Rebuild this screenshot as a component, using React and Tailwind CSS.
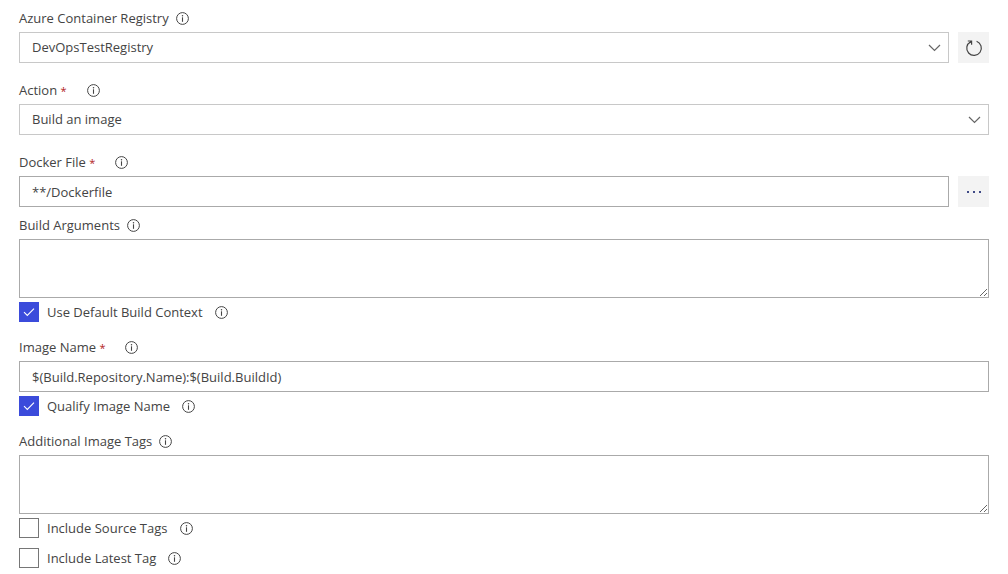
import React, { useState } from "react";

const InfoIcon = () => (
    <svg width="13" height="13" viewBox="0 0 13 13" fill="none" className="shrink-0" aria-hidden="true">
        <circle cx="6.5" cy="6.5" r="5.9" stroke="#444" strokeWidth="1" />
        <path d="M6.5 5.3V9.8" stroke="#444" strokeWidth="1.1" />
        <circle cx="6.5" cy="3.7" r="0.75" fill="#444" />
    </svg>
);

const ChevronIcon = () => (
    <svg
        width="13"
        height="8"
        viewBox="0 0 13 8"
        fill="none"
        className="pointer-events-none absolute right-2 top-3"
        aria-hidden="true"
    >
        <path d="M1 1L6.5 6.5L12 1" stroke="#666" strokeWidth="1.2" />
    </svg>
);

const RefreshIcon = () => (
    <svg width="18" height="18" viewBox="0 0 18 18" fill="none" aria-hidden="true">
        <path d="M11.6 2.3A7.3 7.3 0 1 1 5.6 2.7" stroke="#444" strokeWidth="1.2" />
        <path d="M2.8 2H6.6V5.8M6.6 2L4.4 4.2" stroke="#444" strokeWidth="1.2" />
    </svg>
);

const FieldLabel = ({ id, text, required }) => (
    <div className={`flex h-5 items-center ${required ? "gap-5" : "gap-[7px]"}`}>
        <label htmlFor={id} className="leading-5">
            {text}
            {required && (
                <>
                    {" "}
                    <span className="text-[11px] text-[#b22222]">*</span>
                </>
            )}
        </label>
        <InfoIcon />
    </div>
);

const SelectBox = ({ id, options }) => (
    <div className="relative flex-1">
        <select
            id={id}
            className="block h-[31px] w-full appearance-none border border-[#c8c8c8] bg-white pl-3 pr-8 outline-none focus:border-[#3b4bdb]"
        >
            {options.map((option) => (
                <option key={option}>{option}</option>
            ))}
        </select>
        <ChevronIcon />
    </div>
);

const TextBox = ({ id, initial }) => {
    const [value, setValue] = useState(initial);

    return (
        <input
            id={id}
            type="text"
            value={value}
            onChange={(e) => setValue(e.target.value)}
            className="block h-[31px] w-full min-w-0 flex-1 border border-[#aaaaaa] bg-white px-3 outline-none focus:border-[#3b4bdb]"
        />
    );
};

const TextArea = ({ id }) => (
    <textarea
        id={id}
        className="block h-[59px] w-full resize border border-[#aaaaaa] bg-white px-3 py-1 outline-none focus:border-[#3b4bdb]"
    />
);

const SideButton = ({ label, children }) => (
    <button
        type="button"
        aria-label={label}
        className="flex h-[31px] w-[31px] shrink-0 items-center justify-center bg-[#f3f3f3] hover:bg-[#e6e6e6]"
    >
        {children}
    </button>
);

const CheckRow = ({ id, text, initial = false }) => {
    const [checked, setChecked] = useState(initial);

    return (
        <div className="flex h-5 items-center gap-3">
            <div className="flex items-center gap-2">
                <div className="relative h-5 w-5">
                    <input
                        id={id}
                        type="checkbox"
                        checked={checked}
                        onChange={(e) => setChecked(e.target.checked)}
                        className="block h-5 w-5 appearance-none border border-[#767676] bg-white checked:border-[#3b4bdb] checked:bg-[#3b4bdb]"
                    />
                    {checked && (
                        <svg
                            width="20"
                            height="20"
                            viewBox="0 0 20 20"
                            fill="none"
                            className="pointer-events-none absolute inset-0"
                            aria-hidden="true"
                        >
                            <path d="M5 10.2L8.3 13.4L15 6.6" stroke="#fff" strokeWidth="1.1" />
                        </svg>
                    )}
                </div>
                <label htmlFor={id} className="leading-5">
                    {text}
                </label>
            </div>
            <InfoIcon />
        </div>
    );
};

const App = () => {
    return (
        <form className="bg-white px-[19px] py-2 font-['Open_Sans',sans-serif] text-[13px] text-[#444444]">
            <div className="mb-[17px] flex flex-col gap-1">
                <FieldLabel id="registry" text="Azure Container Registry" />
                <div className="flex gap-[9px]">
                    <SelectBox id="registry" options={["DevOpsTestRegistry"]} />
                    <SideButton label="Refresh">
                        <RefreshIcon />
                    </SideButton>
                </div>
            </div>

            <div className="mb-[17px] flex flex-col gap-1">
                <FieldLabel id="action" text="Action" required />
                <SelectBox id="action" options={["Build an image"]} />
            </div>

            <div className="mb-2 flex flex-col gap-1">
                <FieldLabel id="dockerfile" text="Docker File" required />
                <div className="flex gap-[9px]">
                    <TextBox id="dockerfile" initial="**/Dockerfile" />
                    <SideButton label="Browse">
                        <svg width="16" height="4" viewBox="0 0 16 4" fill="#3f4a86" aria-hidden="true">
                            <rect x="1" y="1" width="2" height="2" />
                            <rect x="7" y="1" width="2" height="2" />
                            <rect x="13" y="1" width="2" height="2" />
                        </svg>
                    </SideButton>
                </div>
            </div>

            <div className="mb-[15px] flex flex-col gap-1">
                <FieldLabel id="buildArgs" text="Build Arguments" />
                <TextArea id="buildArgs" />
                <CheckRow id="defaultContext" text="Use Default Build Context" initial />
            </div>

            <div className="mb-[15px] flex flex-col gap-1">
                <FieldLabel id="imageName" text="Image Name" required />
                <div className="flex">
                    <TextBox id="imageName" initial="$(Build.Repository.Name):$(Build.BuildId)" />
                </div>
                <CheckRow id="qualify" text="Qualify Image Name" initial />
            </div>

            <div className="flex flex-col gap-1">
                <FieldLabel id="imageTags" text="Additional Image Tags" />
                <TextArea id="imageTags" />
                <div className="flex flex-col gap-[10px]">
                    <CheckRow id="sourceTags" text="Include Source Tags" />
                    <CheckRow id="latestTag" text="Include Latest Tag" />
                </div>
            </div>
        </form>
    );
};

export default App;
